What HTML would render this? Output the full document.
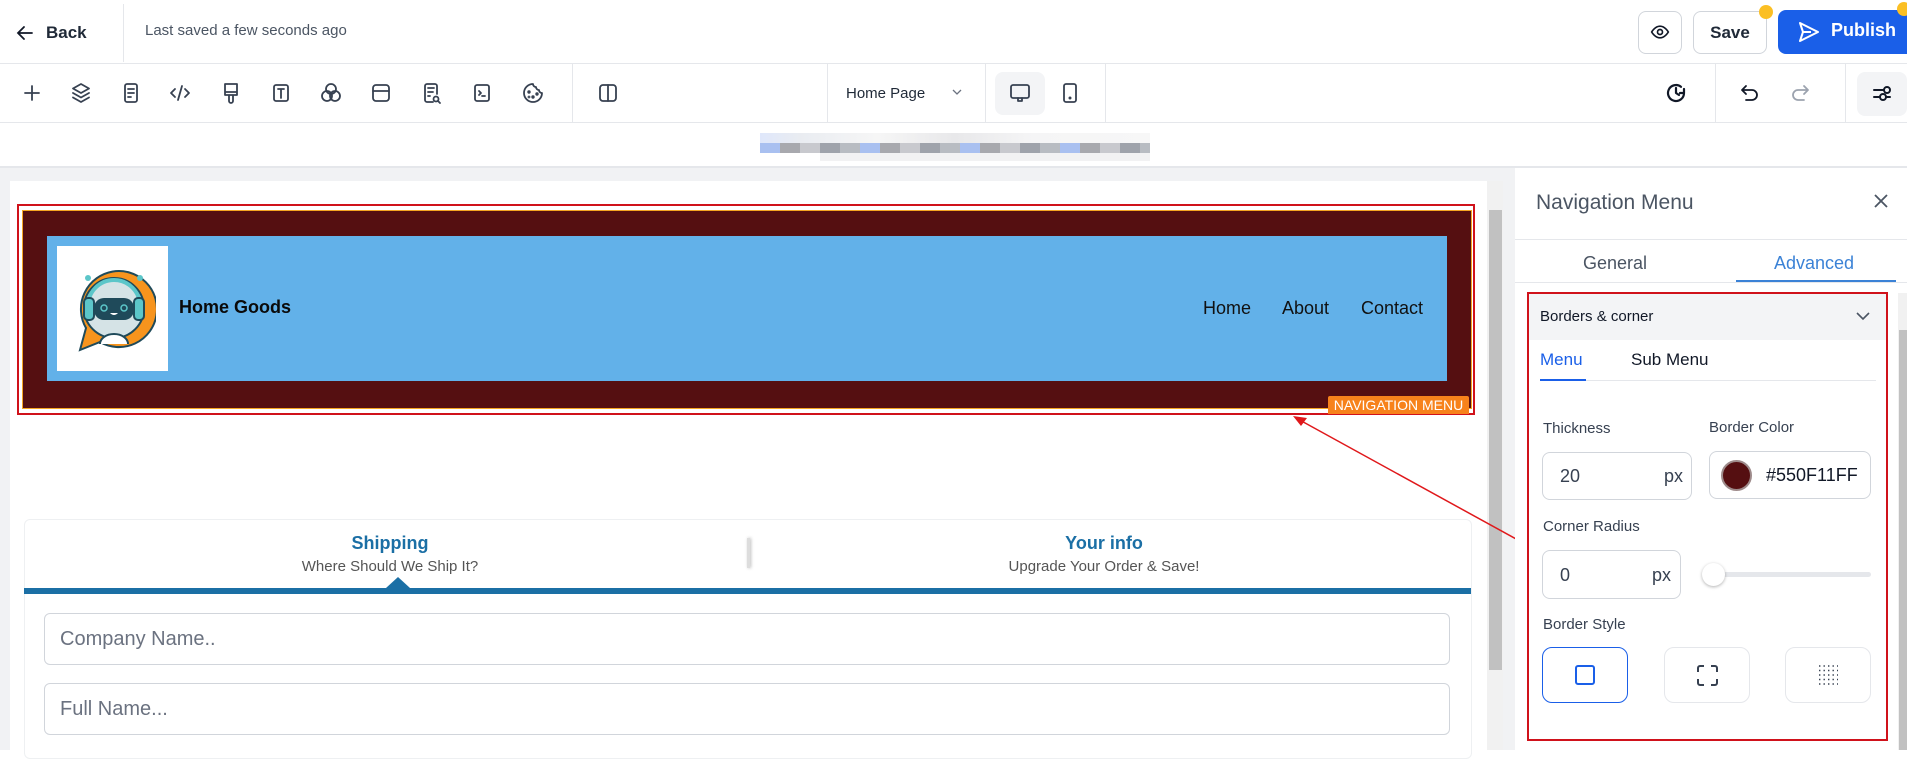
<!DOCTYPE html>
<html><head><meta charset="utf-8"><style>
*{box-sizing:border-box;margin:0;padding:0}
body{width:1907px;height:750px;overflow:hidden;background:#fff;font-family:"Liberation Sans",sans-serif;color:#111827;position:relative}
.a{position:absolute}
.ic{position:absolute;top:81px;width:24px;height:24px}
.ic svg,.s svg{width:24px;height:24px;fill:none;stroke:#374151;stroke-width:1.8;stroke-linecap:round;stroke-linejoin:round}
.inp{position:absolute;border:1px solid #d1d5db;border-radius:8px;background:#fff}
</style></head><body>
<!-- top bar -->
<div class="a" style="left:0;top:0;width:1907px;height:64px;border-bottom:1px solid #e5e7eb"></div>
<svg class="a" style="left:16px;top:25px" width="18" height="16" viewBox="0 0 18 16"><path d="M8 2 2 8l6 6M2 8h14" stroke="#111827" stroke-width="1.8" fill="none" stroke-linecap="round"/></svg>
<div class="a" style="left:46px;top:23px;font-size:17px;font-weight:bold;color:#1f2937">Back</div>
<div class="a" style="left:123px;top:4px;width:1px;height:58px;background:#e5e7eb"></div>
<div class="a" style="left:145px;top:22px;font-size:15px;color:#4b5563">Last saved a few seconds ago</div>
<div class="a" style="left:1638px;top:11px;width:44px;height:43px;border:1px solid #d1d5db;border-radius:8px"></div>
<svg class="a" style="left:1650px;top:22px" width="20" height="20" viewBox="0 0 24 24"><path d="M2 12s4-7 10-7 10 7 10 7-4 7-10 7S2 12 2 12z" stroke="#111827" stroke-width="2" fill="none"/><circle cx="12" cy="12" r="3" stroke="#111827" stroke-width="2" fill="none"/></svg>
<div class="a" style="left:1693px;top:11px;width:74px;height:43px;border:1px solid #d1d5db;border-radius:8px;font-size:17px;font-weight:bold;color:#1f2937;text-align:center;line-height:42px">Save</div>
<div class="a" style="left:1759px;top:5px;width:14px;height:14px;border-radius:50%;background:#fbbf24"></div>
<div class="a" style="left:1778px;top:10px;width:129px;height:44px;background:#1a5fe8;border-radius:8px 0 0 8px"></div>
<svg class="a" style="left:1797px;top:20px" width="24" height="24" viewBox="0 0 24 24"><path d="M3 3l18 9-18 9 3-9-3-9zM6 12h8" stroke="#fff" stroke-width="2" fill="none" stroke-linejoin="round"/></svg>
<div class="a" style="left:1831px;top:20px;font-size:18px;font-weight:bold;color:#fff">Publish</div>
<div class="a" style="left:1897px;top:2px;width:14px;height:14px;border-radius:50%;background:#fbbf24"></div>
<!-- toolbar -->
<div class="a" style="left:0;top:122px;width:1907px;height:1px;background:#e5e7eb"></div>
<div class="ic s" style="left:20px"><svg viewBox="0 0 24 24"><path d="M12 5v14M5 12h14"/></svg></div>
<div class="ic s" style="left:69px"><svg viewBox="0 0 24 24"><path d="M12 3l8 4.5-8 4.5-8-4.5z M4 12l8 4.5 8-4.5 M4 16.5l8 4.5 8-4.5"/></svg></div>
<div class="ic s" style="left:119px"><svg viewBox="0 0 24 24"><rect x="6" y="3" width="12" height="18" rx="2"/><path d="M9 8h6M9 12h6M9 16h3"/></svg></div>
<div class="ic s" style="left:168px"><svg viewBox="0 0 24 24"><path d="M7 8l-4 4 4 4M17 8l4 4-4 4M14 5l-4 14"/></svg></div>
<div class="ic s" style="left:219px"><svg viewBox="0 0 24 24"><path d="M6 3h12v8H6zM6 11v3h12v-3M10 14v6a2 2 0 0 0 4 0v-6"/></svg></div>
<div class="ic s" style="left:269px"><svg viewBox="0 0 24 24"><rect x="5" y="4" width="14" height="16" rx="2"/><path d="M9 8h6M12 8v9"/></svg></div>
<div class="ic s" style="left:319px"><svg viewBox="0 0 24 24"><circle cx="12" cy="8" r="5"/><circle cx="8" cy="15" r="5"/><circle cx="16" cy="15" r="5"/></svg></div>
<div class="ic s" style="left:369px"><svg viewBox="0 0 24 24"><rect x="4" y="4" width="16" height="16" rx="3"/><path d="M4 10h16"/></svg></div>
<div class="ic s" style="left:420px"><svg viewBox="0 0 24 24"><path d="M13 21H7a2 2 0 0 1-2-2V5a2 2 0 0 1 2-2h8a2 2 0 0 1 2 2v8M8 7h6M8 11h5M8 15h2"/><circle cx="16" cy="18" r="2.5"/><path d="M18 20l2 2"/></svg></div>
<div class="ic s" style="left:470px"><svg viewBox="0 0 24 24"><rect x="5" y="4" width="14" height="16" rx="2"/><path d="M9 10l2 2-2 2M12 15h3"/></svg></div>
<div class="ic s" style="left:521px"><svg viewBox="0 0 24 24"><path d="M12 3a9 9 0 1 0 9 9 3 3 0 0 1-3-3 3 3 0 0 1-3-3 3 3 0 0 1-3-3z"/><circle cx="8" cy="11" r=".8"/><circle cx="12" cy="16" r=".8"/><circle cx="16" cy="13" r=".8"/><circle cx="8" cy="16" r=".5"/></svg></div>
<div class="a" style="left:572px;top:64px;width:1px;height:58px;background:#e5e7eb"></div>
<div class="ic s" style="left:596px"><svg viewBox="0 0 24 24"><rect x="4" y="4" width="16" height="16" rx="3"/><path d="M12 4v16"/></svg></div>
<div class="a" style="left:827px;top:64px;width:1px;height:58px;background:#e5e7eb"></div>
<div class="a" style="left:846px;top:85px;font-size:15px;color:#1f2937">Home Page</div>
<svg class="a" style="left:951px;top:88px" width="12" height="8" viewBox="0 0 12 8"><path d="M2 2l4 4 4-4" stroke="#6b7280" stroke-width="1.3" fill="none"/></svg>
<div class="a" style="left:985px;top:64px;width:1px;height:58px;background:#e5e7eb"></div>
<div class="a" style="left:995px;top:72px;width:50px;height:43px;background:#f3f4f6;border-radius:8px"></div>
<div class="ic s" style="left:1008px"><svg viewBox="0 0 24 24"><rect x="3" y="4" width="18" height="13" rx="2"/><path d="M10 17v3h4v-3"/></svg></div>
<div class="ic s" style="left:1058px"><svg viewBox="0 0 24 24"><rect x="6" y="3" width="12" height="18" rx="2"/><circle cx="12" cy="17" r=".6" fill="#374151"/></svg></div>
<div class="a" style="left:1105px;top:64px;width:1px;height:58px;background:#e5e7eb"></div>
<div class="ic s" style="left:1664px"><svg viewBox="0 0 24 24" style="stroke:#111827;stroke-width:2.2"><path d="M20 12a8 8 0 1 1-3-6.2M12 7v5l3 2M20 8v4h-4"/></svg></div>
<div class="a" style="left:1715px;top:64px;width:1px;height:58px;background:#e5e7eb"></div>
<div class="ic s" style="left:1738px"><svg viewBox="0 0 24 24" style="stroke:#111827"><path d="M8 5L4 9l4 4M4 9h10a5 5 0 0 1 0 10H8"/></svg></div>
<div class="ic s" style="left:1788px"><svg viewBox="0 0 24 24" style="stroke:#9ca3af"><path d="M16 5l4 4-4 4M20 9H10a5 5 0 0 0 0 10h6"/></svg></div>
<div class="a" style="left:1845px;top:64px;width:1px;height:58px;background:#e5e7eb"></div>
<div class="a" style="left:1857px;top:72px;width:50px;height:44px;background:#f3f4f6;border-radius:8px"></div>
<div class="ic s" style="left:1870px"><svg viewBox="0 0 24 24" style="stroke:#111827;stroke-width:2"><path d="M4 9h10M4 16h6"/><circle cx="17" cy="9" r="3"/><circle cx="7" cy="16" r="3" transform="translate(6 0)"/><path d="M16 16h4"/></svg></div>
<!-- breadcrumb blur -->
<div class="a" style="left:0;top:123px;width:1907px;height:45px;border-bottom:2px solid #e5e7eb"></div>
<div class="a" style="left:760px;top:133px;width:390px;height:10px;background:linear-gradient(90deg,#dfe7fb 0,#e9ecf1 10%,#f6f6f6 30%,#e8e8ea 50%,#f5f5f6 70%,#f7f7f7 100%)"></div>
<div class="a" style="left:760px;top:143px;width:390px;height:10px;background:repeating-linear-gradient(90deg,#a9c0f0 0 20px,#a8a9ae 20px 40px,#c8c9ce 40px 60px,#9fa3ab 60px 80px,#b8bcc2 80px 100px)"></div>
<div class="a" style="left:820px;top:153px;width:330px;height:8px;background:#f2f2f3"></div>
<!-- canvas -->
<div class="a" style="left:0;top:168px;width:1515px;height:582px;background:#f1f2f4"></div>
<div class="a" style="left:10px;top:181px;width:1477px;height:569px;background:#fff"></div>
<div class="a" style="left:1487px;top:181px;width:16px;height:569px;background:#f1f1f1"></div>
<div class="a" style="left:1489px;top:210px;width:13px;height:460px;background:#c1c1c1"></div>
<div class="a" style="left:17px;top:204px;width:1458px;height:211px;border:2px solid #d0121b"></div>
<div class="a" style="left:22px;top:210px;width:1450px;height:199px;background:#550f11;border:1px solid #f5a623"></div>
<div class="a" style="left:47px;top:236px;width:1400px;height:145px;background:#62b1e9"></div>
<div class="a" style="left:57px;top:246px;width:111px;height:125px;background:#fff"></div>
<svg class="a" style="left:70px;top:262px" width="86" height="96" viewBox="0 0 86 96">
<path d="M10 88 L16 66 A38 38 0 1 1 30 80 Z" fill="#f7941d" stroke="#1f4a5a" stroke-width="2"/>
<circle cx="44" cy="46" r="30" fill="#d5e3e6" stroke="#1f4a5a" stroke-width="2"/>
<path d="M18 44a26 26 0 0 1 52 0" stroke="#5cc6c9" stroke-width="4" fill="none"/>
<rect x="14" y="36" width="10" height="22" rx="4" fill="#5cc6c9" stroke="#1f4a5a" stroke-width="2"/>
<rect x="64" y="36" width="10" height="22" rx="4" fill="#5cc6c9" stroke="#1f4a5a" stroke-width="2"/>
<rect x="24" y="36" width="40" height="22" rx="10" fill="#1f4a5a"/>
<circle cx="34" cy="46" r="3" stroke="#5cc6c9" fill="none" stroke-width="1.5"/><circle cx="54" cy="46" r="3" stroke="#5cc6c9" fill="none" stroke-width="1.5"/>
<path d="M40 51q4 4 8 0" fill="#fff"/>
<circle cx="18" cy="16" r="3" fill="#5cc6c9"/><circle cx="70" cy="16" r="3" fill="#5cc6c9"/>
<path d="M30 82a14 10 0 0 1 28 0" fill="#fff" stroke="#1f4a5a" stroke-width="2"/>
</svg>
<div class="a" style="left:179px;top:297px;font-size:18px;font-weight:bold;color:#0a0a0a">Home Goods</div>
<div class="a" style="left:1203px;top:298px;font-size:18px;color:#111">Home</div>
<div class="a" style="left:1282px;top:298px;font-size:18px;color:#111">About</div>
<div class="a" style="left:1361px;top:298px;font-size:18px;color:#111">Contact</div>
<div class="a" style="left:1328px;top:396px;width:141px;height:18px;background:#f7821b;color:#fff;font-size:14px;line-height:18px;text-align:center;border-radius:2px 2px 0 0">NAVIGATION MENU</div>
<svg class="a" style="left:0;top:0" width="1907" height="750"><line x1="1296" y1="418" x2="1527" y2="545" stroke="#e0181b" stroke-width="1.5"/><path d="M1293 416l14 2-6 8z" fill="#e0181b"/></svg>
<!-- form -->
<div class="a" style="left:24px;top:519px;width:1448px;height:240px;background:#fff;border:1px solid #eef0f2;border-radius:6px"></div>
<div class="a" style="left:190px;top:533px;width:400px;text-align:center;font-size:18px;font-weight:bold;color:#1b6fa5">Shipping</div>
<div class="a" style="left:190px;top:558px;width:400px;text-align:center;font-size:15px;color:#555">Where Should We Ship It?</div>
<div class="a" style="left:747px;top:538px;width:3px;height:30px;background:#ddd;box-shadow:1px 0 3px #bbb"></div>
<div class="a" style="left:904px;top:533px;width:400px;text-align:center;font-size:18px;font-weight:bold;color:#1b6fa5">Your info</div>
<div class="a" style="left:904px;top:558px;width:400px;text-align:center;font-size:15px;color:#555">Upgrade Your Order &amp; Save!</div>
<div class="a" style="left:24px;top:588px;width:1447px;height:6px;background:#1b6fa5"></div>
<div class="a" style="left:386px;top:577px;width:0;height:0;border-left:12px solid transparent;border-right:12px solid transparent;border-bottom:11px solid #1b6fa5"></div>
<div class="inp" style="left:44px;top:613px;width:1406px;height:52px;border-radius:6px"></div>
<div class="a" style="left:60px;top:628px;font-size:20px;color:#6b7280">Company Name..</div>
<div class="inp" style="left:44px;top:683px;width:1406px;height:52px;border-radius:6px"></div>
<div class="a" style="left:60px;top:698px;font-size:20px;color:#6b7280">Full Name...</div>
<!-- right panel -->
<div class="a" style="left:1515px;top:168px;width:392px;height:582px;background:#fff"></div>
<div class="a" style="left:1536px;top:191px;font-size:21px;color:#4b5563">Navigation Menu</div>
<svg class="a" style="left:1873px;top:193px" width="16" height="16" viewBox="0 0 16 16"><path d="M2 2l12 12M14 2L2 14" stroke="#4b5563" stroke-width="1.8"/></svg>
<div class="a" style="left:1515px;top:239px;width:392px;height:1px;background:#e5e7eb"></div>
<div class="a" style="left:1583px;top:253px;font-size:18px;color:#4b5563">General</div>
<div class="a" style="left:1774px;top:253px;font-size:18px;color:#3b82d6">Advanced</div>
<div class="a" style="left:1515px;top:282px;width:392px;height:1px;background:#e5e7eb"></div>
<div class="a" style="left:1736px;top:280px;width:160px;height:2px;background:#3b82d6"></div>
<div class="a" style="left:1898px;top:293px;width:9px;height:457px;background:#f1f1f1"></div>
<div class="a" style="left:1899px;top:330px;width:8px;height:420px;background:#c1c1c1"></div>
<div class="a" style="left:1527px;top:292px;width:361px;height:449px;border:2px solid #d0121b"></div>
<div class="a" style="left:1529px;top:294px;width:357px;height:46px;background:#f3f4f6"></div>
<div class="a" style="left:1540px;top:308px;font-size:15px;color:#111827">Borders &amp; corner</div>
<svg class="a" style="left:1855px;top:311px" width="16" height="10" viewBox="0 0 16 10"><path d="M2 2l6 6 6-6" stroke="#4b5563" stroke-width="1.6" fill="none"/></svg>
<div class="a" style="left:1540px;top:350px;font-size:17px;color:#1a5fe8">Menu</div>
<div class="a" style="left:1631px;top:350px;font-size:17px;color:#111827">Sub Menu</div>
<div class="a" style="left:1540px;top:380px;width:336px;height:1px;background:#e5e7eb"></div>
<div class="a" style="left:1540px;top:379px;width:46px;height:2px;background:#1a5fe8"></div>
<div class="a" style="left:1543px;top:420px;font-size:15px;color:#374151">Thickness</div>
<div class="a" style="left:1709px;top:419px;font-size:15px;color:#374151">Border Color</div>
<div class="inp" style="left:1542px;top:452px;width:150px;height:48px"></div>
<div class="a" style="left:1560px;top:466px;font-size:18px;color:#374151">20</div>
<div class="a" style="left:1664px;top:466px;font-size:18px;color:#374151">px</div>
<div class="inp" style="left:1709px;top:451px;width:162px;height:48px"></div>
<div class="a" style="left:1721px;top:460px;width:31px;height:31px;border-radius:50%;background:#550f11;border:2px solid #9e8b8b"></div>
<div class="a" style="left:1766px;top:465px;font-size:18px;color:#111827">#550F11FF</div>
<div class="a" style="left:1543px;top:518px;font-size:15px;color:#374151">Corner Radius</div>
<div class="inp" style="left:1542px;top:550px;width:139px;height:49px"></div>
<div class="a" style="left:1560px;top:565px;font-size:18px;color:#374151">0</div>
<div class="a" style="left:1652px;top:565px;font-size:18px;color:#374151">px</div>
<div class="a" style="left:1713px;top:572px;width:158px;height:5px;background:#e5e7eb;border-radius:3px"></div>
<div class="a" style="left:1702px;top:563px;width:23px;height:23px;border-radius:50%;background:#fff;box-shadow:0 1px 3px rgba(0,0,0,.3)"></div>
<div class="a" style="left:1543px;top:616px;font-size:15px;color:#374151">Border Style</div>
<div class="inp" style="left:1542px;top:647px;width:86px;height:56px;border-color:#1a5fe8;border-radius:10px"></div>
<div class="a" style="left:1575px;top:665px;width:20px;height:20px;border:2px solid #1a5fe8;border-radius:3px"></div>
<div class="inp" style="left:1664px;top:647px;width:86px;height:56px;border-color:#e5e7eb;border-radius:10px"></div>
<svg class="a" style="left:1697px;top:665px" width="21" height="21" viewBox="0 0 21 21"><path d="M1 7V3a2 2 0 0 1 2-2h4M14 1h4a2 2 0 0 1 2 2v4M20 14v4a2 2 0 0 1-2 2h-4M7 20H3a2 2 0 0 1-2-2v-4" stroke="#374151" stroke-width="2" fill="none"/></svg>
<div class="inp" style="left:1785px;top:647px;width:86px;height:56px;border-color:#e5e7eb;border-radius:10px"></div>
<svg class="a" style="left:1818px;top:665px" width="21" height="21" viewBox="0 0 21 21"><g fill="#374151"><rect x="1" y="1" width="1.5" height="19" style="opacity:0"/></g><path d="M1 1h19M1 5.5h19M1 10h19M1 14.5h19M1 19h19" stroke="#374151" stroke-width="1.4" stroke-dasharray="1.4 3.1" fill="none"/></svg>
</body></html>
